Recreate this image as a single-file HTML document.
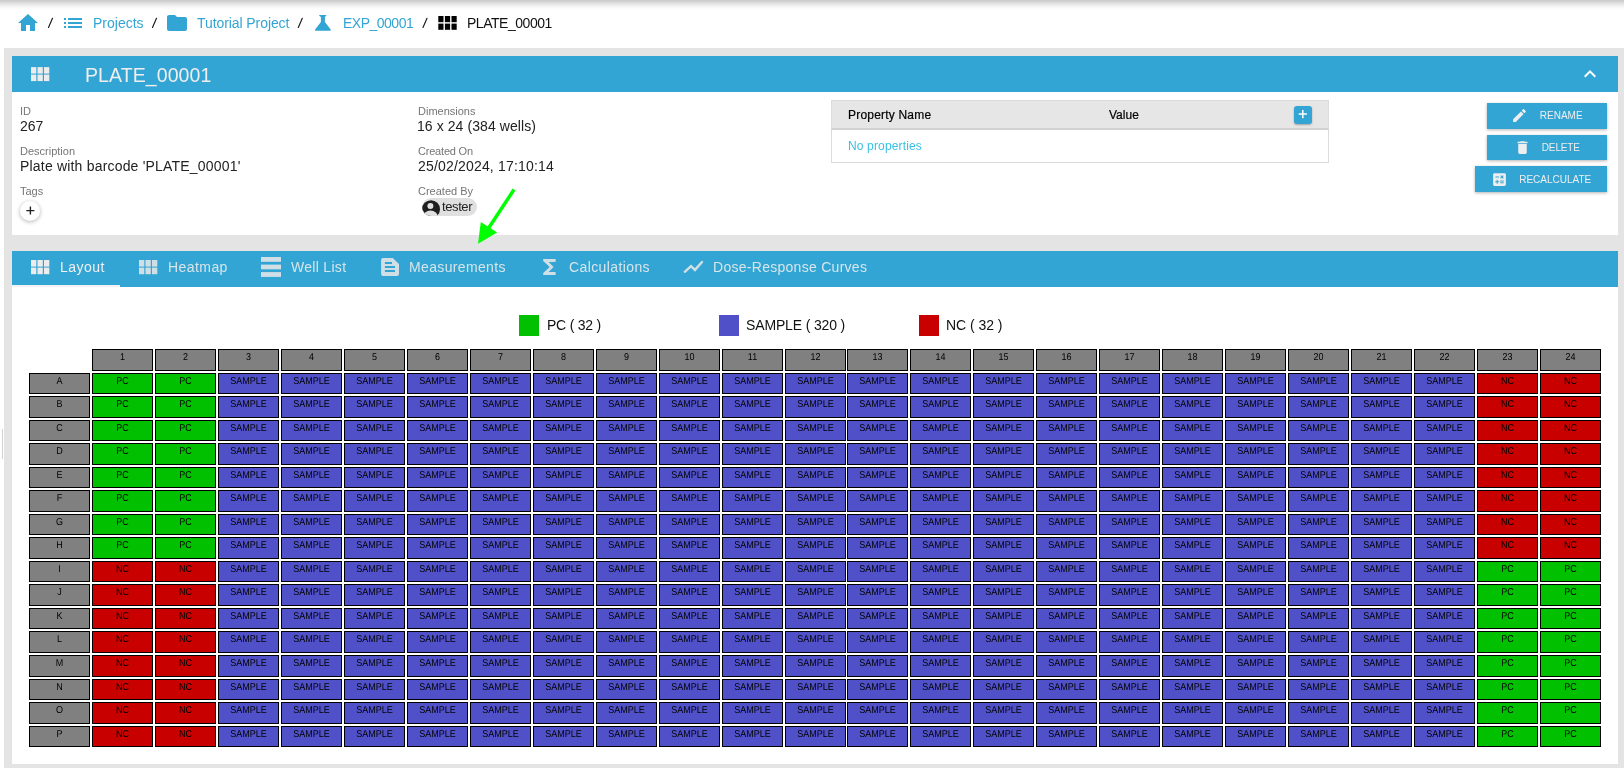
<!DOCTYPE html>
<html><head><meta charset="utf-8">
<style>
*{box-sizing:border-box;margin:0;padding:0}
html,body{width:1624px;height:768px;overflow:hidden;background:#fff;font-family:"Liberation Sans", sans-serif;position:relative}
body>div{will-change:transform}
.abs{position:absolute}
.topshadow{position:absolute;left:0;top:0;width:1624px;height:10px;background:linear-gradient(#cbcbcb 0px,#d3d3d3 1.5px,#dedede 3px,#e9e9e9 4.5px,#f1f1f1 6px,#f8f8f8 7.5px,#fdfdfd 9px,#fff 10px)}
.bc{position:absolute;top:15px;font-size:14px;line-height:16px;white-space:nowrap}
.link{color:#33a5d4}
.sep{color:#222}
.panel{position:absolute;left:4px;top:48px;width:1620px;height:720px;background:#e4e4e4}
.card{position:absolute;background:#fff}
.hdr{position:absolute;left:12px;top:56px;width:1606px;height:36px;background:#33a5d4}
.lbl{position:absolute;font-size:11px;line-height:12px;color:#757575;white-space:nowrap}
.val{position:absolute;font-size:14px;line-height:16px;color:#222;white-space:nowrap}
.tabs{position:absolute;left:12px;top:251px;width:1606px;height:36px;background:#33a5d4}
.tab{position:absolute;top:258.7px;font-size:14px;line-height:16px;color:#d7e5ea;white-space:nowrap}
.btn{position:absolute;background:#33a5d4;color:#eee;font-size:10px;line-height:12px;box-shadow:0 1px 3px rgba(0,0,0,.3)}
.btn span{position:absolute;top:7px;white-space:nowrap}
.c{position:absolute;width:61px;height:21px;border:1px solid #000;text-align:center;font-size:9px;line-height:10px;color:#000;text-rendering:geometricPrecision}
.c span{position:absolute;left:0;right:0;top:1.3px;transform:scale(1,1.1);transform-origin:50% 0}
.g{background:#808080}
.pc{background:#00c000}
.nc{background:#c80000}
.sa{background:#5050c8}
.leg{position:absolute;top:315px;width:20px;height:21px}
.legt{position:absolute;top:317px;font-size:14px;line-height:16px;color:#111;white-space:nowrap}
</style></head><body>
<div class="topshadow"></div>
<!-- breadcrumb -->
<svg class="abs" style="left:16.2px;top:11px" width="24" height="24" viewBox="0 0 24 24"><path fill="#33a5d4" d="M10 20v-6h4v6h5v-8h3L12 3 2 12h3v8z"/></svg>
<svg class="abs" style="left:60.6px;top:11.2px" width="24" height="24" viewBox="0 0 24 24"><path fill="#33a5d4" d="M3 13h2v-2H3v2zm0 4h2v-2H3v2zm0-8h2V7H3v2zm4 4h14v-2H7v2zm0 4h14v-2H7v2zM7 7v2h14V7H7z"/></svg>
<div class="bc link" style="left:93px">Projects</div>
<svg class="abs" style="left:164.7px;top:11px" width="24" height="24" viewBox="0 0 24 24"><path fill="#33a5d4" d="M10 4H4c-1.1 0-1.99.9-1.99 2L2 18c0 1.1.9 2 2 2h16c1.1 0 2-.9 2-2V8c0-1.1-.9-2-2-2h-8l-2-2z"/></svg>
<div class="bc link" style="left:196.5px;letter-spacing:-0.08px">Tutorial Project</div>
<svg class="abs" style="left:0;top:0" width="1624" height="40"><path fill="#33a5d4" d="M319.2 15H326.2V15.7L324.9 17.1V21.9L330.7 29.5Q331.3 30.8 329.9 30.8H315.9Q314.5 30.8 315.1 29.5L320.9 21.9V17.1L319.2 15.7Z"/></svg>
<div class="bc link" style="left:342.5px;letter-spacing:-0.5px">EXP_00001</div>
<svg class="abs" style="left:0;top:0" width="1624" height="40"><g fill="#000"><rect x="438.3" y="16" width="5.2" height="6.2"/><rect x="444.9" y="16" width="5.2" height="6.2"/><rect x="451.5" y="16" width="5.2" height="6.2"/><rect x="438.3" y="23.6" width="5.2" height="6.2"/><rect x="444.9" y="23.6" width="5.2" height="6.2"/><rect x="451.5" y="23.6" width="5.2" height="6.2"/></g></svg>
<div class="bc" style="left:467px;color:#111;letter-spacing:-0.47px">PLATE_00001</div>

<svg class="abs" style="left:0;top:0" width="600" height="40"><g stroke="#1a1a1a" stroke-width="1.15" stroke-linecap="round"><line x1="48.5" y1="27.4" x2="52.5" y2="18.3"/><line x1="152.5" y1="27.4" x2="156.5" y2="18.3"/><line x1="298.3" y1="27.4" x2="302.3" y2="18.3"/><line x1="423" y1="27.4" x2="427" y2="18.3"/></g></svg>
<div class="panel"></div>
<div class="card" style="left:12px;top:56px;width:1606px;height:179px"></div>
<div class="hdr"></div>
<svg class="abs" style="left:0;top:50px" width="1624" height="40"><g fill="#ececec"><rect x="31" y="17.1" width="5.3" height="6.5"/><rect x="37.5" y="17.1" width="5.3" height="6.5"/><rect x="44" y="17.1" width="5.3" height="6.5"/><rect x="31" y="24.6" width="5.3" height="6.5"/><rect x="37.5" y="24.6" width="5.3" height="6.5"/><rect x="44" y="24.6" width="5.3" height="6.5"/></g></svg>
<div class="abs" style="left:84.5px;top:64px;font-size:19.5px;line-height:22px;color:#eeeeee;white-space:nowrap;letter-spacing:0.09px">PLATE_00001</div>
<svg class="abs" style="left:1578px;top:62.3px" width="24" height="24" viewBox="0 0 24 24"><path fill="#fff" d="M12 8l-6 6 1.41 1.41L12 10.83l4.59 4.58L18 14z"/></svg>

<div class="lbl" style="left:20px;top:105px">ID</div>
<div class="val" style="left:20px;top:118px">267</div>
<div class="lbl" style="left:20px;top:145px">Description</div>
<div class="val" style="left:20px;top:158px;letter-spacing:0.19px">Plate with barcode 'PLATE_00001'</div>
<div class="lbl" style="left:20px;top:185px">Tags</div>
<div class="abs" style="left:19.5px;top:201.4px;width:20px;height:20px;border-radius:50%;background:#fff;box-shadow:0 1px 4px rgba(0,0,0,.3)"></div>
<svg class="abs" style="left:19.5px;top:201.4px" width="20" height="20" viewBox="0 0 20 20"><path d="M10.4 5.6v8M6.4 9.6h8" stroke="#222" stroke-width="1.4"/></svg>

<div class="lbl" style="left:418px;top:105px">Dimensions</div>
<div class="val" style="left:417px;top:118px;letter-spacing:0.08px">16 x 24 (384 wells)</div>
<div class="lbl" style="left:418px;top:145px;letter-spacing:-0.2px">Created On</div>
<div class="val" style="left:418px;top:158px;letter-spacing:0.18px">25/02/2024, 17:10:14</div>
<div class="lbl" style="left:418px;top:185px">Created By</div>
<div class="abs" style="left:422px;top:198px;width:55px;height:18px;border-radius:9px;background:#e0e0e0"></div>
<svg class="abs" style="left:0;top:190px" width="500" height="30"><defs><clipPath id="chipc"><rect x="422" y="8" width="55" height="18" rx="9"/></clipPath></defs><g clip-path="url(#chipc)"><circle cx="431" cy="19.2" r="9" fill="#1e1e1e"/><ellipse cx="430.5" cy="27" rx="7.5" ry="6.4" fill="#e0e0e0"/><circle cx="430.4" cy="15.9" r="3" fill="#e0e0e0"/></g></svg>
<div class="abs" style="left:441.5px;top:199.5px;font-size:13px;line-height:14px;color:#222;white-space:nowrap;letter-spacing:-0.4px">tester</div>

<!-- properties table -->
<div class="abs" style="left:831px;top:100px;width:498px;height:63px;border:1px solid #dcdcdc;background:#fff"></div>
<div class="abs" style="left:831px;top:100px;width:498px;height:30px;background:#e6e6e6;border:1px solid #dcdcdc;border-bottom:2px solid #d2d2d2"></div>
<div class="abs" style="left:848px;top:108px;font-size:12px;line-height:14px;color:#000;white-space:nowrap;letter-spacing:0.2px;-webkit-text-stroke:0.2px #000">Property Name</div>
<div class="abs" style="left:1108.5px;top:108px;font-size:12px;line-height:14px;color:#000;white-space:nowrap;-webkit-text-stroke:0.2px #000">Value</div>
<div class="abs" style="left:1294px;top:106px;width:18px;height:18px;border-radius:3px;background:#33a5d4;box-shadow:0 1px 2px rgba(0,0,0,.3)"></div>
<svg class="abs" style="left:1294px;top:106px" width="18" height="18" viewBox="0 0 18 18"><path d="M8.8 4v8.2M4.7 8.1h8.2" stroke="#fff" stroke-width="1.5"/></svg>
<div class="abs" style="left:848px;top:139px;font-size:12px;line-height:14px;color:#3bc0e4;white-space:nowrap;letter-spacing:0.15px">No properties</div>

<!-- buttons -->
<div class="btn" style="left:1487px;top:103px;width:120px;height:26px"><span style="left:52.8px">RENAME</span></div>
<svg class="abs" style="left:1511.1px;top:107.1px" width="17" height="17" viewBox="0 0 24 24"><path fill="#eee" d="M3 17.25V21h3.75L17.81 9.94l-3.75-3.75L3 17.25zM20.71 7.04c.39-.39.39-1.02 0-1.41l-2.34-2.34c-.39-.39-1.02-.39-1.41 0l-1.83 1.83 3.75 3.75 1.83-1.83z"/></svg>
<div class="btn" style="left:1487px;top:135px;width:120px;height:25px"><span style="left:54.8px;letter-spacing:-0.15px">DELETE</span></div>
<svg class="abs" style="left:1513.5px;top:139px" width="17" height="17" viewBox="0 0 24 24"><path fill="#eee" d="M6 19c0 1.1.9 2 2 2h8c1.1 0 2-.9 2-2V7H6v12zM19 4h-3.5l-1-1h-5l-1 1H5v2h14V4z"/></svg>
<div class="btn" style="left:1475px;top:166px;width:132px;height:26px"><span style="left:44.2px;top:8px">RECALCULATE</span></div>
<svg class="abs" style="left:1491px;top:171px" width="17" height="17" viewBox="0 0 24 24"><path fill="#eee" d="M19 3H5c-1.1 0-2 .9-2 2v14c0 1.1.9 2 2 2h14c1.1 0 2-.9 2-2V5c0-1.1-.9-2-2-2zm-5.97 4.06L14.09 6l1.41 1.41L16.91 6l1.060 1.06-1.41 1.41 1.41 1.41-1.06 1.06-1.41-1.4-1.41 1.41-1.06-1.06 1.41-1.41-1.41-1.42zm-6.78.66h5v1.5h-5v-1.5zM11.5 16h-2v2H8v-2H6v-1.5h2v-2h1.5v2h2V16zm6.5 1.25h-5v-1.5h5v1.5zm0-2.5h-5v-1.5h5v1.5z"/></svg>

<!-- tabs card -->
<div class="card" style="left:12px;top:251px;width:1606px;height:513px"></div>
<div class="tabs"></div>
<div class="abs" style="left:12px;top:285px;width:108px;height:2px;background:#f2f2f2"></div>
<svg class="abs" style="left:0;top:250px" width="1624" height="40">
<g fill="#ececec"><rect x="31" y="10" width="5.3" height="6.6"/><rect x="37.5" y="10" width="5.3" height="6.6"/><rect x="44" y="10" width="5.3" height="6.6"/><rect x="31" y="17.6" width="5.3" height="6.6"/><rect x="37.5" y="17.6" width="5.3" height="6.6"/><rect x="44" y="17.6" width="5.3" height="6.6"/></g>
<g fill="#d0dfe6"><rect x="139" y="10" width="5.3" height="6.6"/><rect x="145.5" y="10" width="5.3" height="6.6"/><rect x="152" y="10" width="5.3" height="6.6"/><rect x="139" y="17.6" width="5.3" height="6.6"/><rect x="145.5" y="17.6" width="5.3" height="6.6"/><rect x="152" y="17.6" width="5.3" height="6.6"/></g>
<g fill="#d0dfe6"><rect x="261" y="7" width="20" height="4.8"/><rect x="261" y="14.6" width="20" height="4.7"/><rect x="261" y="22.1" width="20" height="4.8"/></g>
<path fill="#d0dfe6" fill-rule="evenodd" d="M383.1 7.9H392.8L399 13.9V24A2 2 0 0 1 397 26H383.1A2 2 0 0 1 381.1 24V9.9A2 2 0 0 1 383.1 7.9Z M384.9 11.9H392V13.9H384.9Z M384.9 15.9H395V17.9H384.9Z M384.9 19.9H395V21.9H384.9Z"/>
<path fill="#d0dfe6" d="M555.6 9H543.2v2l6.5 6L543.2 23v2h12.4v-3h-7l5-5-5-5h7z"/>
<polyline points="684.8,21.8 691,16.1 695,19.9 702,12" fill="none" stroke="#d0dfe6" stroke-width="2.4" stroke-linecap="round" stroke-linejoin="miter"/>
</svg>
<div class="tab" style="left:60px;color:#f0f0f0;letter-spacing:0.48px">Layout</div>
<div class="tab" style="left:168px;letter-spacing:0.43px">Heatmap</div>
<div class="tab" style="left:290.5px;letter-spacing:0.3px">Well List</div>
<div class="tab" style="left:409px;letter-spacing:0.35px">Measurements</div>
<div class="tab" style="left:569px;letter-spacing:0.39px">Calculations</div>
<div class="tab" style="left:713px;letter-spacing:0.28px">Dose-Response Curves</div>

<!-- legend -->
<div class="leg" style="left:519px;background:#00c000"></div>
<div class="legt" style="left:547px;letter-spacing:-0.22px">PC ( 32 )</div>
<div class="leg" style="left:719px;background:#5050c8"></div>
<div class="legt" style="left:746px;letter-spacing:-0.15px">SAMPLE ( 320 )</div>
<div class="leg" style="left:919px;background:#c80000"></div>
<div class="legt" style="left:945.8px;letter-spacing:-0.05px">NC ( 32 )</div>

<div class="c g" style="left:92px;top:349px;height:22px"><span>1</span></div>
<div class="c g" style="left:155px;top:349px;height:22px"><span>2</span></div>
<div class="c g" style="left:218px;top:349px;height:22px"><span>3</span></div>
<div class="c g" style="left:281px;top:349px;height:22px"><span>4</span></div>
<div class="c g" style="left:344px;top:349px;height:22px"><span>5</span></div>
<div class="c g" style="left:407px;top:349px;height:22px"><span>6</span></div>
<div class="c g" style="left:470px;top:349px;height:22px"><span>7</span></div>
<div class="c g" style="left:533px;top:349px;height:22px"><span>8</span></div>
<div class="c g" style="left:596px;top:349px;height:22px"><span>9</span></div>
<div class="c g" style="left:659px;top:349px;height:22px"><span>10</span></div>
<div class="c g" style="left:722px;top:349px;height:22px"><span>11</span></div>
<div class="c g" style="left:785px;top:349px;height:22px"><span>12</span></div>
<div class="c g" style="left:847px;top:349px;height:22px"><span>13</span></div>
<div class="c g" style="left:910px;top:349px;height:22px"><span>14</span></div>
<div class="c g" style="left:973px;top:349px;height:22px"><span>15</span></div>
<div class="c g" style="left:1036px;top:349px;height:22px"><span>16</span></div>
<div class="c g" style="left:1099px;top:349px;height:22px"><span>17</span></div>
<div class="c g" style="left:1162px;top:349px;height:22px"><span>18</span></div>
<div class="c g" style="left:1225px;top:349px;height:22px"><span>19</span></div>
<div class="c g" style="left:1288px;top:349px;height:22px"><span>20</span></div>
<div class="c g" style="left:1351px;top:349px;height:22px"><span>21</span></div>
<div class="c g" style="left:1414px;top:349px;height:22px"><span>22</span></div>
<div class="c g" style="left:1477px;top:349px;height:22px"><span>23</span></div>
<div class="c g" style="left:1540px;top:349px;height:22px"><span>24</span></div>
<div class="c g" style="left:29px;top:373px;height:21px"><span>A</span></div>
<div class="c pc" style="left:92px;top:373px;height:21px"><span>PC</span></div>
<div class="c pc" style="left:155px;top:373px;height:21px"><span>PC</span></div>
<div class="c sa" style="left:218px;top:373px;height:21px"><span>SAMPLE</span></div>
<div class="c sa" style="left:281px;top:373px;height:21px"><span>SAMPLE</span></div>
<div class="c sa" style="left:344px;top:373px;height:21px"><span>SAMPLE</span></div>
<div class="c sa" style="left:407px;top:373px;height:21px"><span>SAMPLE</span></div>
<div class="c sa" style="left:470px;top:373px;height:21px"><span>SAMPLE</span></div>
<div class="c sa" style="left:533px;top:373px;height:21px"><span>SAMPLE</span></div>
<div class="c sa" style="left:596px;top:373px;height:21px"><span>SAMPLE</span></div>
<div class="c sa" style="left:659px;top:373px;height:21px"><span>SAMPLE</span></div>
<div class="c sa" style="left:722px;top:373px;height:21px"><span>SAMPLE</span></div>
<div class="c sa" style="left:785px;top:373px;height:21px"><span>SAMPLE</span></div>
<div class="c sa" style="left:847px;top:373px;height:21px"><span>SAMPLE</span></div>
<div class="c sa" style="left:910px;top:373px;height:21px"><span>SAMPLE</span></div>
<div class="c sa" style="left:973px;top:373px;height:21px"><span>SAMPLE</span></div>
<div class="c sa" style="left:1036px;top:373px;height:21px"><span>SAMPLE</span></div>
<div class="c sa" style="left:1099px;top:373px;height:21px"><span>SAMPLE</span></div>
<div class="c sa" style="left:1162px;top:373px;height:21px"><span>SAMPLE</span></div>
<div class="c sa" style="left:1225px;top:373px;height:21px"><span>SAMPLE</span></div>
<div class="c sa" style="left:1288px;top:373px;height:21px"><span>SAMPLE</span></div>
<div class="c sa" style="left:1351px;top:373px;height:21px"><span>SAMPLE</span></div>
<div class="c sa" style="left:1414px;top:373px;height:21px"><span>SAMPLE</span></div>
<div class="c nc" style="left:1477px;top:373px;height:21px"><span>NC</span></div>
<div class="c nc" style="left:1540px;top:373px;height:21px"><span>NC</span></div>
<div class="c g" style="left:29px;top:396px;height:22px"><span>B</span></div>
<div class="c pc" style="left:92px;top:396px;height:22px"><span>PC</span></div>
<div class="c pc" style="left:155px;top:396px;height:22px"><span>PC</span></div>
<div class="c sa" style="left:218px;top:396px;height:22px"><span>SAMPLE</span></div>
<div class="c sa" style="left:281px;top:396px;height:22px"><span>SAMPLE</span></div>
<div class="c sa" style="left:344px;top:396px;height:22px"><span>SAMPLE</span></div>
<div class="c sa" style="left:407px;top:396px;height:22px"><span>SAMPLE</span></div>
<div class="c sa" style="left:470px;top:396px;height:22px"><span>SAMPLE</span></div>
<div class="c sa" style="left:533px;top:396px;height:22px"><span>SAMPLE</span></div>
<div class="c sa" style="left:596px;top:396px;height:22px"><span>SAMPLE</span></div>
<div class="c sa" style="left:659px;top:396px;height:22px"><span>SAMPLE</span></div>
<div class="c sa" style="left:722px;top:396px;height:22px"><span>SAMPLE</span></div>
<div class="c sa" style="left:785px;top:396px;height:22px"><span>SAMPLE</span></div>
<div class="c sa" style="left:847px;top:396px;height:22px"><span>SAMPLE</span></div>
<div class="c sa" style="left:910px;top:396px;height:22px"><span>SAMPLE</span></div>
<div class="c sa" style="left:973px;top:396px;height:22px"><span>SAMPLE</span></div>
<div class="c sa" style="left:1036px;top:396px;height:22px"><span>SAMPLE</span></div>
<div class="c sa" style="left:1099px;top:396px;height:22px"><span>SAMPLE</span></div>
<div class="c sa" style="left:1162px;top:396px;height:22px"><span>SAMPLE</span></div>
<div class="c sa" style="left:1225px;top:396px;height:22px"><span>SAMPLE</span></div>
<div class="c sa" style="left:1288px;top:396px;height:22px"><span>SAMPLE</span></div>
<div class="c sa" style="left:1351px;top:396px;height:22px"><span>SAMPLE</span></div>
<div class="c sa" style="left:1414px;top:396px;height:22px"><span>SAMPLE</span></div>
<div class="c nc" style="left:1477px;top:396px;height:22px"><span>NC</span></div>
<div class="c nc" style="left:1540px;top:396px;height:22px"><span>NC</span></div>
<div class="c g" style="left:29px;top:420px;height:21px"><span>C</span></div>
<div class="c pc" style="left:92px;top:420px;height:21px"><span>PC</span></div>
<div class="c pc" style="left:155px;top:420px;height:21px"><span>PC</span></div>
<div class="c sa" style="left:218px;top:420px;height:21px"><span>SAMPLE</span></div>
<div class="c sa" style="left:281px;top:420px;height:21px"><span>SAMPLE</span></div>
<div class="c sa" style="left:344px;top:420px;height:21px"><span>SAMPLE</span></div>
<div class="c sa" style="left:407px;top:420px;height:21px"><span>SAMPLE</span></div>
<div class="c sa" style="left:470px;top:420px;height:21px"><span>SAMPLE</span></div>
<div class="c sa" style="left:533px;top:420px;height:21px"><span>SAMPLE</span></div>
<div class="c sa" style="left:596px;top:420px;height:21px"><span>SAMPLE</span></div>
<div class="c sa" style="left:659px;top:420px;height:21px"><span>SAMPLE</span></div>
<div class="c sa" style="left:722px;top:420px;height:21px"><span>SAMPLE</span></div>
<div class="c sa" style="left:785px;top:420px;height:21px"><span>SAMPLE</span></div>
<div class="c sa" style="left:847px;top:420px;height:21px"><span>SAMPLE</span></div>
<div class="c sa" style="left:910px;top:420px;height:21px"><span>SAMPLE</span></div>
<div class="c sa" style="left:973px;top:420px;height:21px"><span>SAMPLE</span></div>
<div class="c sa" style="left:1036px;top:420px;height:21px"><span>SAMPLE</span></div>
<div class="c sa" style="left:1099px;top:420px;height:21px"><span>SAMPLE</span></div>
<div class="c sa" style="left:1162px;top:420px;height:21px"><span>SAMPLE</span></div>
<div class="c sa" style="left:1225px;top:420px;height:21px"><span>SAMPLE</span></div>
<div class="c sa" style="left:1288px;top:420px;height:21px"><span>SAMPLE</span></div>
<div class="c sa" style="left:1351px;top:420px;height:21px"><span>SAMPLE</span></div>
<div class="c sa" style="left:1414px;top:420px;height:21px"><span>SAMPLE</span></div>
<div class="c nc" style="left:1477px;top:420px;height:21px"><span>NC</span></div>
<div class="c nc" style="left:1540px;top:420px;height:21px"><span>NC</span></div>
<div class="c g" style="left:29px;top:443px;height:22px"><span>D</span></div>
<div class="c pc" style="left:92px;top:443px;height:22px"><span>PC</span></div>
<div class="c pc" style="left:155px;top:443px;height:22px"><span>PC</span></div>
<div class="c sa" style="left:218px;top:443px;height:22px"><span>SAMPLE</span></div>
<div class="c sa" style="left:281px;top:443px;height:22px"><span>SAMPLE</span></div>
<div class="c sa" style="left:344px;top:443px;height:22px"><span>SAMPLE</span></div>
<div class="c sa" style="left:407px;top:443px;height:22px"><span>SAMPLE</span></div>
<div class="c sa" style="left:470px;top:443px;height:22px"><span>SAMPLE</span></div>
<div class="c sa" style="left:533px;top:443px;height:22px"><span>SAMPLE</span></div>
<div class="c sa" style="left:596px;top:443px;height:22px"><span>SAMPLE</span></div>
<div class="c sa" style="left:659px;top:443px;height:22px"><span>SAMPLE</span></div>
<div class="c sa" style="left:722px;top:443px;height:22px"><span>SAMPLE</span></div>
<div class="c sa" style="left:785px;top:443px;height:22px"><span>SAMPLE</span></div>
<div class="c sa" style="left:847px;top:443px;height:22px"><span>SAMPLE</span></div>
<div class="c sa" style="left:910px;top:443px;height:22px"><span>SAMPLE</span></div>
<div class="c sa" style="left:973px;top:443px;height:22px"><span>SAMPLE</span></div>
<div class="c sa" style="left:1036px;top:443px;height:22px"><span>SAMPLE</span></div>
<div class="c sa" style="left:1099px;top:443px;height:22px"><span>SAMPLE</span></div>
<div class="c sa" style="left:1162px;top:443px;height:22px"><span>SAMPLE</span></div>
<div class="c sa" style="left:1225px;top:443px;height:22px"><span>SAMPLE</span></div>
<div class="c sa" style="left:1288px;top:443px;height:22px"><span>SAMPLE</span></div>
<div class="c sa" style="left:1351px;top:443px;height:22px"><span>SAMPLE</span></div>
<div class="c sa" style="left:1414px;top:443px;height:22px"><span>SAMPLE</span></div>
<div class="c nc" style="left:1477px;top:443px;height:22px"><span>NC</span></div>
<div class="c nc" style="left:1540px;top:443px;height:22px"><span>NC</span></div>
<div class="c g" style="left:29px;top:467px;height:21px"><span>E</span></div>
<div class="c pc" style="left:92px;top:467px;height:21px"><span>PC</span></div>
<div class="c pc" style="left:155px;top:467px;height:21px"><span>PC</span></div>
<div class="c sa" style="left:218px;top:467px;height:21px"><span>SAMPLE</span></div>
<div class="c sa" style="left:281px;top:467px;height:21px"><span>SAMPLE</span></div>
<div class="c sa" style="left:344px;top:467px;height:21px"><span>SAMPLE</span></div>
<div class="c sa" style="left:407px;top:467px;height:21px"><span>SAMPLE</span></div>
<div class="c sa" style="left:470px;top:467px;height:21px"><span>SAMPLE</span></div>
<div class="c sa" style="left:533px;top:467px;height:21px"><span>SAMPLE</span></div>
<div class="c sa" style="left:596px;top:467px;height:21px"><span>SAMPLE</span></div>
<div class="c sa" style="left:659px;top:467px;height:21px"><span>SAMPLE</span></div>
<div class="c sa" style="left:722px;top:467px;height:21px"><span>SAMPLE</span></div>
<div class="c sa" style="left:785px;top:467px;height:21px"><span>SAMPLE</span></div>
<div class="c sa" style="left:847px;top:467px;height:21px"><span>SAMPLE</span></div>
<div class="c sa" style="left:910px;top:467px;height:21px"><span>SAMPLE</span></div>
<div class="c sa" style="left:973px;top:467px;height:21px"><span>SAMPLE</span></div>
<div class="c sa" style="left:1036px;top:467px;height:21px"><span>SAMPLE</span></div>
<div class="c sa" style="left:1099px;top:467px;height:21px"><span>SAMPLE</span></div>
<div class="c sa" style="left:1162px;top:467px;height:21px"><span>SAMPLE</span></div>
<div class="c sa" style="left:1225px;top:467px;height:21px"><span>SAMPLE</span></div>
<div class="c sa" style="left:1288px;top:467px;height:21px"><span>SAMPLE</span></div>
<div class="c sa" style="left:1351px;top:467px;height:21px"><span>SAMPLE</span></div>
<div class="c sa" style="left:1414px;top:467px;height:21px"><span>SAMPLE</span></div>
<div class="c nc" style="left:1477px;top:467px;height:21px"><span>NC</span></div>
<div class="c nc" style="left:1540px;top:467px;height:21px"><span>NC</span></div>
<div class="c g" style="left:29px;top:490px;height:22px"><span>F</span></div>
<div class="c pc" style="left:92px;top:490px;height:22px"><span>PC</span></div>
<div class="c pc" style="left:155px;top:490px;height:22px"><span>PC</span></div>
<div class="c sa" style="left:218px;top:490px;height:22px"><span>SAMPLE</span></div>
<div class="c sa" style="left:281px;top:490px;height:22px"><span>SAMPLE</span></div>
<div class="c sa" style="left:344px;top:490px;height:22px"><span>SAMPLE</span></div>
<div class="c sa" style="left:407px;top:490px;height:22px"><span>SAMPLE</span></div>
<div class="c sa" style="left:470px;top:490px;height:22px"><span>SAMPLE</span></div>
<div class="c sa" style="left:533px;top:490px;height:22px"><span>SAMPLE</span></div>
<div class="c sa" style="left:596px;top:490px;height:22px"><span>SAMPLE</span></div>
<div class="c sa" style="left:659px;top:490px;height:22px"><span>SAMPLE</span></div>
<div class="c sa" style="left:722px;top:490px;height:22px"><span>SAMPLE</span></div>
<div class="c sa" style="left:785px;top:490px;height:22px"><span>SAMPLE</span></div>
<div class="c sa" style="left:847px;top:490px;height:22px"><span>SAMPLE</span></div>
<div class="c sa" style="left:910px;top:490px;height:22px"><span>SAMPLE</span></div>
<div class="c sa" style="left:973px;top:490px;height:22px"><span>SAMPLE</span></div>
<div class="c sa" style="left:1036px;top:490px;height:22px"><span>SAMPLE</span></div>
<div class="c sa" style="left:1099px;top:490px;height:22px"><span>SAMPLE</span></div>
<div class="c sa" style="left:1162px;top:490px;height:22px"><span>SAMPLE</span></div>
<div class="c sa" style="left:1225px;top:490px;height:22px"><span>SAMPLE</span></div>
<div class="c sa" style="left:1288px;top:490px;height:22px"><span>SAMPLE</span></div>
<div class="c sa" style="left:1351px;top:490px;height:22px"><span>SAMPLE</span></div>
<div class="c sa" style="left:1414px;top:490px;height:22px"><span>SAMPLE</span></div>
<div class="c nc" style="left:1477px;top:490px;height:22px"><span>NC</span></div>
<div class="c nc" style="left:1540px;top:490px;height:22px"><span>NC</span></div>
<div class="c g" style="left:29px;top:514px;height:21px"><span>G</span></div>
<div class="c pc" style="left:92px;top:514px;height:21px"><span>PC</span></div>
<div class="c pc" style="left:155px;top:514px;height:21px"><span>PC</span></div>
<div class="c sa" style="left:218px;top:514px;height:21px"><span>SAMPLE</span></div>
<div class="c sa" style="left:281px;top:514px;height:21px"><span>SAMPLE</span></div>
<div class="c sa" style="left:344px;top:514px;height:21px"><span>SAMPLE</span></div>
<div class="c sa" style="left:407px;top:514px;height:21px"><span>SAMPLE</span></div>
<div class="c sa" style="left:470px;top:514px;height:21px"><span>SAMPLE</span></div>
<div class="c sa" style="left:533px;top:514px;height:21px"><span>SAMPLE</span></div>
<div class="c sa" style="left:596px;top:514px;height:21px"><span>SAMPLE</span></div>
<div class="c sa" style="left:659px;top:514px;height:21px"><span>SAMPLE</span></div>
<div class="c sa" style="left:722px;top:514px;height:21px"><span>SAMPLE</span></div>
<div class="c sa" style="left:785px;top:514px;height:21px"><span>SAMPLE</span></div>
<div class="c sa" style="left:847px;top:514px;height:21px"><span>SAMPLE</span></div>
<div class="c sa" style="left:910px;top:514px;height:21px"><span>SAMPLE</span></div>
<div class="c sa" style="left:973px;top:514px;height:21px"><span>SAMPLE</span></div>
<div class="c sa" style="left:1036px;top:514px;height:21px"><span>SAMPLE</span></div>
<div class="c sa" style="left:1099px;top:514px;height:21px"><span>SAMPLE</span></div>
<div class="c sa" style="left:1162px;top:514px;height:21px"><span>SAMPLE</span></div>
<div class="c sa" style="left:1225px;top:514px;height:21px"><span>SAMPLE</span></div>
<div class="c sa" style="left:1288px;top:514px;height:21px"><span>SAMPLE</span></div>
<div class="c sa" style="left:1351px;top:514px;height:21px"><span>SAMPLE</span></div>
<div class="c sa" style="left:1414px;top:514px;height:21px"><span>SAMPLE</span></div>
<div class="c nc" style="left:1477px;top:514px;height:21px"><span>NC</span></div>
<div class="c nc" style="left:1540px;top:514px;height:21px"><span>NC</span></div>
<div class="c g" style="left:29px;top:537px;height:22px"><span>H</span></div>
<div class="c pc" style="left:92px;top:537px;height:22px"><span>PC</span></div>
<div class="c pc" style="left:155px;top:537px;height:22px"><span>PC</span></div>
<div class="c sa" style="left:218px;top:537px;height:22px"><span>SAMPLE</span></div>
<div class="c sa" style="left:281px;top:537px;height:22px"><span>SAMPLE</span></div>
<div class="c sa" style="left:344px;top:537px;height:22px"><span>SAMPLE</span></div>
<div class="c sa" style="left:407px;top:537px;height:22px"><span>SAMPLE</span></div>
<div class="c sa" style="left:470px;top:537px;height:22px"><span>SAMPLE</span></div>
<div class="c sa" style="left:533px;top:537px;height:22px"><span>SAMPLE</span></div>
<div class="c sa" style="left:596px;top:537px;height:22px"><span>SAMPLE</span></div>
<div class="c sa" style="left:659px;top:537px;height:22px"><span>SAMPLE</span></div>
<div class="c sa" style="left:722px;top:537px;height:22px"><span>SAMPLE</span></div>
<div class="c sa" style="left:785px;top:537px;height:22px"><span>SAMPLE</span></div>
<div class="c sa" style="left:847px;top:537px;height:22px"><span>SAMPLE</span></div>
<div class="c sa" style="left:910px;top:537px;height:22px"><span>SAMPLE</span></div>
<div class="c sa" style="left:973px;top:537px;height:22px"><span>SAMPLE</span></div>
<div class="c sa" style="left:1036px;top:537px;height:22px"><span>SAMPLE</span></div>
<div class="c sa" style="left:1099px;top:537px;height:22px"><span>SAMPLE</span></div>
<div class="c sa" style="left:1162px;top:537px;height:22px"><span>SAMPLE</span></div>
<div class="c sa" style="left:1225px;top:537px;height:22px"><span>SAMPLE</span></div>
<div class="c sa" style="left:1288px;top:537px;height:22px"><span>SAMPLE</span></div>
<div class="c sa" style="left:1351px;top:537px;height:22px"><span>SAMPLE</span></div>
<div class="c sa" style="left:1414px;top:537px;height:22px"><span>SAMPLE</span></div>
<div class="c nc" style="left:1477px;top:537px;height:22px"><span>NC</span></div>
<div class="c nc" style="left:1540px;top:537px;height:22px"><span>NC</span></div>
<div class="c g" style="left:29px;top:561px;height:21px"><span>I</span></div>
<div class="c nc" style="left:92px;top:561px;height:21px"><span>NC</span></div>
<div class="c nc" style="left:155px;top:561px;height:21px"><span>NC</span></div>
<div class="c sa" style="left:218px;top:561px;height:21px"><span>SAMPLE</span></div>
<div class="c sa" style="left:281px;top:561px;height:21px"><span>SAMPLE</span></div>
<div class="c sa" style="left:344px;top:561px;height:21px"><span>SAMPLE</span></div>
<div class="c sa" style="left:407px;top:561px;height:21px"><span>SAMPLE</span></div>
<div class="c sa" style="left:470px;top:561px;height:21px"><span>SAMPLE</span></div>
<div class="c sa" style="left:533px;top:561px;height:21px"><span>SAMPLE</span></div>
<div class="c sa" style="left:596px;top:561px;height:21px"><span>SAMPLE</span></div>
<div class="c sa" style="left:659px;top:561px;height:21px"><span>SAMPLE</span></div>
<div class="c sa" style="left:722px;top:561px;height:21px"><span>SAMPLE</span></div>
<div class="c sa" style="left:785px;top:561px;height:21px"><span>SAMPLE</span></div>
<div class="c sa" style="left:847px;top:561px;height:21px"><span>SAMPLE</span></div>
<div class="c sa" style="left:910px;top:561px;height:21px"><span>SAMPLE</span></div>
<div class="c sa" style="left:973px;top:561px;height:21px"><span>SAMPLE</span></div>
<div class="c sa" style="left:1036px;top:561px;height:21px"><span>SAMPLE</span></div>
<div class="c sa" style="left:1099px;top:561px;height:21px"><span>SAMPLE</span></div>
<div class="c sa" style="left:1162px;top:561px;height:21px"><span>SAMPLE</span></div>
<div class="c sa" style="left:1225px;top:561px;height:21px"><span>SAMPLE</span></div>
<div class="c sa" style="left:1288px;top:561px;height:21px"><span>SAMPLE</span></div>
<div class="c sa" style="left:1351px;top:561px;height:21px"><span>SAMPLE</span></div>
<div class="c sa" style="left:1414px;top:561px;height:21px"><span>SAMPLE</span></div>
<div class="c pc" style="left:1477px;top:561px;height:21px"><span>PC</span></div>
<div class="c pc" style="left:1540px;top:561px;height:21px"><span>PC</span></div>
<div class="c g" style="left:29px;top:584px;height:22px"><span>J</span></div>
<div class="c nc" style="left:92px;top:584px;height:22px"><span>NC</span></div>
<div class="c nc" style="left:155px;top:584px;height:22px"><span>NC</span></div>
<div class="c sa" style="left:218px;top:584px;height:22px"><span>SAMPLE</span></div>
<div class="c sa" style="left:281px;top:584px;height:22px"><span>SAMPLE</span></div>
<div class="c sa" style="left:344px;top:584px;height:22px"><span>SAMPLE</span></div>
<div class="c sa" style="left:407px;top:584px;height:22px"><span>SAMPLE</span></div>
<div class="c sa" style="left:470px;top:584px;height:22px"><span>SAMPLE</span></div>
<div class="c sa" style="left:533px;top:584px;height:22px"><span>SAMPLE</span></div>
<div class="c sa" style="left:596px;top:584px;height:22px"><span>SAMPLE</span></div>
<div class="c sa" style="left:659px;top:584px;height:22px"><span>SAMPLE</span></div>
<div class="c sa" style="left:722px;top:584px;height:22px"><span>SAMPLE</span></div>
<div class="c sa" style="left:785px;top:584px;height:22px"><span>SAMPLE</span></div>
<div class="c sa" style="left:847px;top:584px;height:22px"><span>SAMPLE</span></div>
<div class="c sa" style="left:910px;top:584px;height:22px"><span>SAMPLE</span></div>
<div class="c sa" style="left:973px;top:584px;height:22px"><span>SAMPLE</span></div>
<div class="c sa" style="left:1036px;top:584px;height:22px"><span>SAMPLE</span></div>
<div class="c sa" style="left:1099px;top:584px;height:22px"><span>SAMPLE</span></div>
<div class="c sa" style="left:1162px;top:584px;height:22px"><span>SAMPLE</span></div>
<div class="c sa" style="left:1225px;top:584px;height:22px"><span>SAMPLE</span></div>
<div class="c sa" style="left:1288px;top:584px;height:22px"><span>SAMPLE</span></div>
<div class="c sa" style="left:1351px;top:584px;height:22px"><span>SAMPLE</span></div>
<div class="c sa" style="left:1414px;top:584px;height:22px"><span>SAMPLE</span></div>
<div class="c pc" style="left:1477px;top:584px;height:22px"><span>PC</span></div>
<div class="c pc" style="left:1540px;top:584px;height:22px"><span>PC</span></div>
<div class="c g" style="left:29px;top:608px;height:21px"><span>K</span></div>
<div class="c nc" style="left:92px;top:608px;height:21px"><span>NC</span></div>
<div class="c nc" style="left:155px;top:608px;height:21px"><span>NC</span></div>
<div class="c sa" style="left:218px;top:608px;height:21px"><span>SAMPLE</span></div>
<div class="c sa" style="left:281px;top:608px;height:21px"><span>SAMPLE</span></div>
<div class="c sa" style="left:344px;top:608px;height:21px"><span>SAMPLE</span></div>
<div class="c sa" style="left:407px;top:608px;height:21px"><span>SAMPLE</span></div>
<div class="c sa" style="left:470px;top:608px;height:21px"><span>SAMPLE</span></div>
<div class="c sa" style="left:533px;top:608px;height:21px"><span>SAMPLE</span></div>
<div class="c sa" style="left:596px;top:608px;height:21px"><span>SAMPLE</span></div>
<div class="c sa" style="left:659px;top:608px;height:21px"><span>SAMPLE</span></div>
<div class="c sa" style="left:722px;top:608px;height:21px"><span>SAMPLE</span></div>
<div class="c sa" style="left:785px;top:608px;height:21px"><span>SAMPLE</span></div>
<div class="c sa" style="left:847px;top:608px;height:21px"><span>SAMPLE</span></div>
<div class="c sa" style="left:910px;top:608px;height:21px"><span>SAMPLE</span></div>
<div class="c sa" style="left:973px;top:608px;height:21px"><span>SAMPLE</span></div>
<div class="c sa" style="left:1036px;top:608px;height:21px"><span>SAMPLE</span></div>
<div class="c sa" style="left:1099px;top:608px;height:21px"><span>SAMPLE</span></div>
<div class="c sa" style="left:1162px;top:608px;height:21px"><span>SAMPLE</span></div>
<div class="c sa" style="left:1225px;top:608px;height:21px"><span>SAMPLE</span></div>
<div class="c sa" style="left:1288px;top:608px;height:21px"><span>SAMPLE</span></div>
<div class="c sa" style="left:1351px;top:608px;height:21px"><span>SAMPLE</span></div>
<div class="c sa" style="left:1414px;top:608px;height:21px"><span>SAMPLE</span></div>
<div class="c pc" style="left:1477px;top:608px;height:21px"><span>PC</span></div>
<div class="c pc" style="left:1540px;top:608px;height:21px"><span>PC</span></div>
<div class="c g" style="left:29px;top:631px;height:22px"><span>L</span></div>
<div class="c nc" style="left:92px;top:631px;height:22px"><span>NC</span></div>
<div class="c nc" style="left:155px;top:631px;height:22px"><span>NC</span></div>
<div class="c sa" style="left:218px;top:631px;height:22px"><span>SAMPLE</span></div>
<div class="c sa" style="left:281px;top:631px;height:22px"><span>SAMPLE</span></div>
<div class="c sa" style="left:344px;top:631px;height:22px"><span>SAMPLE</span></div>
<div class="c sa" style="left:407px;top:631px;height:22px"><span>SAMPLE</span></div>
<div class="c sa" style="left:470px;top:631px;height:22px"><span>SAMPLE</span></div>
<div class="c sa" style="left:533px;top:631px;height:22px"><span>SAMPLE</span></div>
<div class="c sa" style="left:596px;top:631px;height:22px"><span>SAMPLE</span></div>
<div class="c sa" style="left:659px;top:631px;height:22px"><span>SAMPLE</span></div>
<div class="c sa" style="left:722px;top:631px;height:22px"><span>SAMPLE</span></div>
<div class="c sa" style="left:785px;top:631px;height:22px"><span>SAMPLE</span></div>
<div class="c sa" style="left:847px;top:631px;height:22px"><span>SAMPLE</span></div>
<div class="c sa" style="left:910px;top:631px;height:22px"><span>SAMPLE</span></div>
<div class="c sa" style="left:973px;top:631px;height:22px"><span>SAMPLE</span></div>
<div class="c sa" style="left:1036px;top:631px;height:22px"><span>SAMPLE</span></div>
<div class="c sa" style="left:1099px;top:631px;height:22px"><span>SAMPLE</span></div>
<div class="c sa" style="left:1162px;top:631px;height:22px"><span>SAMPLE</span></div>
<div class="c sa" style="left:1225px;top:631px;height:22px"><span>SAMPLE</span></div>
<div class="c sa" style="left:1288px;top:631px;height:22px"><span>SAMPLE</span></div>
<div class="c sa" style="left:1351px;top:631px;height:22px"><span>SAMPLE</span></div>
<div class="c sa" style="left:1414px;top:631px;height:22px"><span>SAMPLE</span></div>
<div class="c pc" style="left:1477px;top:631px;height:22px"><span>PC</span></div>
<div class="c pc" style="left:1540px;top:631px;height:22px"><span>PC</span></div>
<div class="c g" style="left:29px;top:655px;height:22px"><span>M</span></div>
<div class="c nc" style="left:92px;top:655px;height:22px"><span>NC</span></div>
<div class="c nc" style="left:155px;top:655px;height:22px"><span>NC</span></div>
<div class="c sa" style="left:218px;top:655px;height:22px"><span>SAMPLE</span></div>
<div class="c sa" style="left:281px;top:655px;height:22px"><span>SAMPLE</span></div>
<div class="c sa" style="left:344px;top:655px;height:22px"><span>SAMPLE</span></div>
<div class="c sa" style="left:407px;top:655px;height:22px"><span>SAMPLE</span></div>
<div class="c sa" style="left:470px;top:655px;height:22px"><span>SAMPLE</span></div>
<div class="c sa" style="left:533px;top:655px;height:22px"><span>SAMPLE</span></div>
<div class="c sa" style="left:596px;top:655px;height:22px"><span>SAMPLE</span></div>
<div class="c sa" style="left:659px;top:655px;height:22px"><span>SAMPLE</span></div>
<div class="c sa" style="left:722px;top:655px;height:22px"><span>SAMPLE</span></div>
<div class="c sa" style="left:785px;top:655px;height:22px"><span>SAMPLE</span></div>
<div class="c sa" style="left:847px;top:655px;height:22px"><span>SAMPLE</span></div>
<div class="c sa" style="left:910px;top:655px;height:22px"><span>SAMPLE</span></div>
<div class="c sa" style="left:973px;top:655px;height:22px"><span>SAMPLE</span></div>
<div class="c sa" style="left:1036px;top:655px;height:22px"><span>SAMPLE</span></div>
<div class="c sa" style="left:1099px;top:655px;height:22px"><span>SAMPLE</span></div>
<div class="c sa" style="left:1162px;top:655px;height:22px"><span>SAMPLE</span></div>
<div class="c sa" style="left:1225px;top:655px;height:22px"><span>SAMPLE</span></div>
<div class="c sa" style="left:1288px;top:655px;height:22px"><span>SAMPLE</span></div>
<div class="c sa" style="left:1351px;top:655px;height:22px"><span>SAMPLE</span></div>
<div class="c sa" style="left:1414px;top:655px;height:22px"><span>SAMPLE</span></div>
<div class="c pc" style="left:1477px;top:655px;height:22px"><span>PC</span></div>
<div class="c pc" style="left:1540px;top:655px;height:22px"><span>PC</span></div>
<div class="c g" style="left:29px;top:679px;height:21px"><span>N</span></div>
<div class="c nc" style="left:92px;top:679px;height:21px"><span>NC</span></div>
<div class="c nc" style="left:155px;top:679px;height:21px"><span>NC</span></div>
<div class="c sa" style="left:218px;top:679px;height:21px"><span>SAMPLE</span></div>
<div class="c sa" style="left:281px;top:679px;height:21px"><span>SAMPLE</span></div>
<div class="c sa" style="left:344px;top:679px;height:21px"><span>SAMPLE</span></div>
<div class="c sa" style="left:407px;top:679px;height:21px"><span>SAMPLE</span></div>
<div class="c sa" style="left:470px;top:679px;height:21px"><span>SAMPLE</span></div>
<div class="c sa" style="left:533px;top:679px;height:21px"><span>SAMPLE</span></div>
<div class="c sa" style="left:596px;top:679px;height:21px"><span>SAMPLE</span></div>
<div class="c sa" style="left:659px;top:679px;height:21px"><span>SAMPLE</span></div>
<div class="c sa" style="left:722px;top:679px;height:21px"><span>SAMPLE</span></div>
<div class="c sa" style="left:785px;top:679px;height:21px"><span>SAMPLE</span></div>
<div class="c sa" style="left:847px;top:679px;height:21px"><span>SAMPLE</span></div>
<div class="c sa" style="left:910px;top:679px;height:21px"><span>SAMPLE</span></div>
<div class="c sa" style="left:973px;top:679px;height:21px"><span>SAMPLE</span></div>
<div class="c sa" style="left:1036px;top:679px;height:21px"><span>SAMPLE</span></div>
<div class="c sa" style="left:1099px;top:679px;height:21px"><span>SAMPLE</span></div>
<div class="c sa" style="left:1162px;top:679px;height:21px"><span>SAMPLE</span></div>
<div class="c sa" style="left:1225px;top:679px;height:21px"><span>SAMPLE</span></div>
<div class="c sa" style="left:1288px;top:679px;height:21px"><span>SAMPLE</span></div>
<div class="c sa" style="left:1351px;top:679px;height:21px"><span>SAMPLE</span></div>
<div class="c sa" style="left:1414px;top:679px;height:21px"><span>SAMPLE</span></div>
<div class="c pc" style="left:1477px;top:679px;height:21px"><span>PC</span></div>
<div class="c pc" style="left:1540px;top:679px;height:21px"><span>PC</span></div>
<div class="c g" style="left:29px;top:702px;height:22px"><span>O</span></div>
<div class="c nc" style="left:92px;top:702px;height:22px"><span>NC</span></div>
<div class="c nc" style="left:155px;top:702px;height:22px"><span>NC</span></div>
<div class="c sa" style="left:218px;top:702px;height:22px"><span>SAMPLE</span></div>
<div class="c sa" style="left:281px;top:702px;height:22px"><span>SAMPLE</span></div>
<div class="c sa" style="left:344px;top:702px;height:22px"><span>SAMPLE</span></div>
<div class="c sa" style="left:407px;top:702px;height:22px"><span>SAMPLE</span></div>
<div class="c sa" style="left:470px;top:702px;height:22px"><span>SAMPLE</span></div>
<div class="c sa" style="left:533px;top:702px;height:22px"><span>SAMPLE</span></div>
<div class="c sa" style="left:596px;top:702px;height:22px"><span>SAMPLE</span></div>
<div class="c sa" style="left:659px;top:702px;height:22px"><span>SAMPLE</span></div>
<div class="c sa" style="left:722px;top:702px;height:22px"><span>SAMPLE</span></div>
<div class="c sa" style="left:785px;top:702px;height:22px"><span>SAMPLE</span></div>
<div class="c sa" style="left:847px;top:702px;height:22px"><span>SAMPLE</span></div>
<div class="c sa" style="left:910px;top:702px;height:22px"><span>SAMPLE</span></div>
<div class="c sa" style="left:973px;top:702px;height:22px"><span>SAMPLE</span></div>
<div class="c sa" style="left:1036px;top:702px;height:22px"><span>SAMPLE</span></div>
<div class="c sa" style="left:1099px;top:702px;height:22px"><span>SAMPLE</span></div>
<div class="c sa" style="left:1162px;top:702px;height:22px"><span>SAMPLE</span></div>
<div class="c sa" style="left:1225px;top:702px;height:22px"><span>SAMPLE</span></div>
<div class="c sa" style="left:1288px;top:702px;height:22px"><span>SAMPLE</span></div>
<div class="c sa" style="left:1351px;top:702px;height:22px"><span>SAMPLE</span></div>
<div class="c sa" style="left:1414px;top:702px;height:22px"><span>SAMPLE</span></div>
<div class="c pc" style="left:1477px;top:702px;height:22px"><span>PC</span></div>
<div class="c pc" style="left:1540px;top:702px;height:22px"><span>PC</span></div>
<div class="c g" style="left:29px;top:726px;height:21px"><span>P</span></div>
<div class="c nc" style="left:92px;top:726px;height:21px"><span>NC</span></div>
<div class="c nc" style="left:155px;top:726px;height:21px"><span>NC</span></div>
<div class="c sa" style="left:218px;top:726px;height:21px"><span>SAMPLE</span></div>
<div class="c sa" style="left:281px;top:726px;height:21px"><span>SAMPLE</span></div>
<div class="c sa" style="left:344px;top:726px;height:21px"><span>SAMPLE</span></div>
<div class="c sa" style="left:407px;top:726px;height:21px"><span>SAMPLE</span></div>
<div class="c sa" style="left:470px;top:726px;height:21px"><span>SAMPLE</span></div>
<div class="c sa" style="left:533px;top:726px;height:21px"><span>SAMPLE</span></div>
<div class="c sa" style="left:596px;top:726px;height:21px"><span>SAMPLE</span></div>
<div class="c sa" style="left:659px;top:726px;height:21px"><span>SAMPLE</span></div>
<div class="c sa" style="left:722px;top:726px;height:21px"><span>SAMPLE</span></div>
<div class="c sa" style="left:785px;top:726px;height:21px"><span>SAMPLE</span></div>
<div class="c sa" style="left:847px;top:726px;height:21px"><span>SAMPLE</span></div>
<div class="c sa" style="left:910px;top:726px;height:21px"><span>SAMPLE</span></div>
<div class="c sa" style="left:973px;top:726px;height:21px"><span>SAMPLE</span></div>
<div class="c sa" style="left:1036px;top:726px;height:21px"><span>SAMPLE</span></div>
<div class="c sa" style="left:1099px;top:726px;height:21px"><span>SAMPLE</span></div>
<div class="c sa" style="left:1162px;top:726px;height:21px"><span>SAMPLE</span></div>
<div class="c sa" style="left:1225px;top:726px;height:21px"><span>SAMPLE</span></div>
<div class="c sa" style="left:1288px;top:726px;height:21px"><span>SAMPLE</span></div>
<div class="c sa" style="left:1351px;top:726px;height:21px"><span>SAMPLE</span></div>
<div class="c sa" style="left:1414px;top:726px;height:21px"><span>SAMPLE</span></div>
<div class="c pc" style="left:1477px;top:726px;height:21px"><span>PC</span></div>
<div class="c pc" style="left:1540px;top:726px;height:21px"><span>PC</span></div>

<div class="abs" style="left:2px;top:429px;width:1px;height:30px;background:#d0d0d0"></div>

<!-- green arrow -->
<svg class="abs" style="left:0;top:0" width="1624" height="768" viewBox="0 0 1624 768" style="pointer-events:none">
<line x1="514" y1="189.5" x2="486" y2="232" stroke="#00ff00" stroke-width="3.5"/>
<path fill="#00ff00" d="M478 243.8L480.8 222L497.2 232.4Z"/>
</svg>
</body></html>
